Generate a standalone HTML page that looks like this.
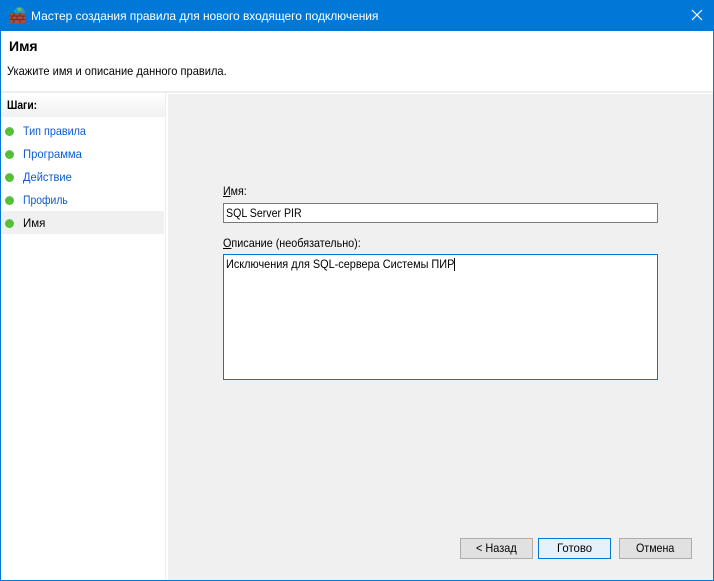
<!DOCTYPE html>
<html lang="ru">
<head>
<meta charset="utf-8">
<style>
html,body{margin:0;padding:0;width:714px;height:581px;overflow:hidden;background:#fff}
body{position:relative;font-family:"Liberation Sans",sans-serif;font-size:12px;color:#000}
div,span{position:absolute;box-sizing:border-box}
.t{white-space:nowrap;line-height:15px;height:15px;transform-origin:0 50%}
.t u{text-decoration:underline}
.l{color:#0a5bd0}
.dot{left:5px;width:9px;height:9px;border-radius:50%;background:radial-gradient(circle at 50% 65%,#55d030 0,#4fbb30 45%,#9abf96 100%)}
.btn{top:538px;width:73px;height:21px;background:#e1e1e1;border:1px solid #adadad}
</style>
</head>
<body>
<div style="left:0;top:0;width:714px;height:31px;background:#0078d7"></div>
<div style="left:0;top:0;width:1px;height:581px;background:#0078d7"></div>
<div style="left:713px;top:0;width:1px;height:581px;background:#0078d7"></div>
<div style="left:0;top:580px;width:714px;height:1px;background:#0078d7"></div>

<svg style="position:absolute;left:9px;top:7px" width="18" height="16" viewBox="0 0 18 16">
<circle cx="10.500" cy="5.500" r="5.500" fill="#2f8fd8"/>
<path d="M8 1.500q2-1.500 4-.5l1 2-3 1.500z" fill="#6cc04a"/>
<rect x="1" y="6" width="15" height="10" fill="#a8503c"/>
<path d="M1 9h15M1 12.500h15M5 6v3M11 6v3M3 9v3.500M8 9v3.500M14 9v3.500M5 12.500v3.500M11 12.500v3.500" stroke="#6d2e22" stroke-width="1"/>
</svg>
<div class="t" style="left:31px;top:9px;color:#fff;letter-spacing:-.05px">Мастер создания правила для нового входящего подключения</div>
<svg style="position:absolute;left:691px;top:9px" width="12" height="12" viewBox="0 0 12 12"><path d="M1 1l10 10M11 1L1 11" stroke="#fff" stroke-width="1.200" fill="none"/></svg>

<div class="t" style="left:9px;top:39px;font-weight:bold;font-size:14px">Имя</div>
<div class="t" style="left:7px;top:64px;transform:scaleX(.924)">Укажите имя и описание данного правила.</div>

<div style="left:1px;top:91px;width:712px;height:2px;background:#eeeeee"></div>
<div style="left:165px;top:93px;width:1px;height:487px;background:#eeeeee"></div>
<div style="left:168px;top:94px;width:545px;height:486px;background:#f0f0f0"></div>

<div style="left:1px;top:94px;width:164px;height:23px;background:linear-gradient(#ffffff,#f0f0f0)"></div>
<div class="t" style="left:7px;top:98px;font-weight:bold;transform:scaleX(.857)">Шаги:</div>

<div style="left:1px;top:211px;width:163px;height:23px;background:#f0f0f0"></div>
<div class="dot" style="top:127px"></div>
<div class="dot" style="top:150px"></div>
<div class="dot" style="top:173px"></div>
<div class="dot" style="top:196px"></div>
<div class="dot" style="top:219px"></div>
<div class="t l" style="left:23px;top:124px;transform:scaleX(.9)">Тип правила</div>
<div class="t l" style="left:23px;top:147px;transform:scaleX(.937)">Программа</div>
<div class="t l" style="left:23px;top:170px;transform:scaleX(.925)">Действие</div>
<div class="t l" style="left:23px;top:193px;transform:scaleX(.865)">Профиль</div>
<div class="t" style="left:23px;top:216px;transform:scaleX(.956)">Имя</div>

<div class="t" style="left:223px;top:184px;transform:scaleX(.889)"><u>И</u>мя:</div>
<div style="left:223px;top:203px;width:435px;height:20px;background:#fff;border:1px solid #7a7a7a"></div>
<div class="t" style="left:226px;top:206px;transform:scaleX(.884)">SQL Server PIR</div>

<div class="t" style="left:223px;top:236px;transform:scaleX(.9)"><u>О</u>писание (необязательно):</div>
<div style="left:223px;top:254px;width:435px;height:126px;background:#fff;border:1px solid #0078d7"></div>
<div class="t" style="left:226px;top:257px;transform:scaleX(.908)">Исключения для SQL-сервера Системы ПИР</div>
<div style="left:454px;top:258px;width:1px;height:13px;background:#000"></div>

<div class="btn" style="left:460px"></div>
<div class="btn" style="left:538px;background:#e5f1fb;border-color:#0078d7"></div>
<div class="btn" style="left:619px"></div>
<div class="t" style="left:476px;top:541px;transform:scaleX(.91)">&lt; Назад</div>
<div class="t" style="left:557px;top:541px;transform:scaleX(.946)">Готово</div>
<div class="t" style="left:635.500px;top:541px;transform:scaleX(.89)">Отмена</div>
</body>
</html>
